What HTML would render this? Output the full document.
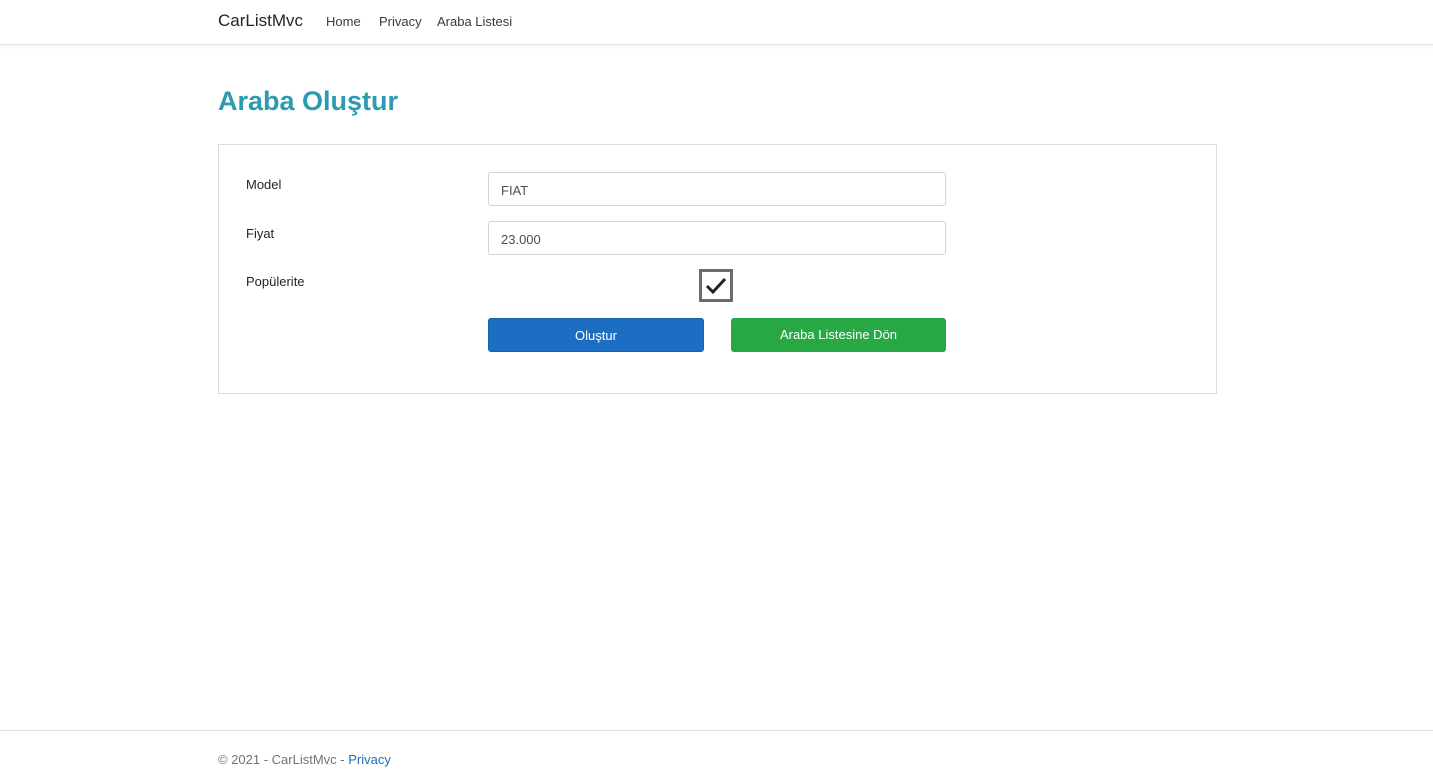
<!DOCTYPE html>
<html><head><meta charset="utf-8"><style>
*{box-sizing:border-box;margin:0;padding:0}
body{width:1433px;height:771px;position:relative;background:#fff;font-family:"Liberation Sans",sans-serif;font-size:13px;color:#212529;overflow:hidden}
.nav{position:absolute;left:0;top:0;width:1433px;height:45px;border-bottom:1px solid #dee2e6;box-shadow:0 2px 4px rgba(0,0,0,.05)}
.brand{position:absolute;left:218px;top:11px;font-size:17px;color:#212529}
.nl{position:absolute;top:14px;font-size:13px;color:#3a3a3a}
h1{position:absolute;left:218px;top:86px;font-size:27px;font-weight:bold;color:#2b9bb0}
.card{position:absolute;left:218px;top:144px;width:999px;height:250px;border:1px solid #dcdcdc}
.lbl{position:absolute;left:246px;font-size:13px}
.inp{position:absolute;left:488px;width:458px;height:34px;border:1px solid #ced4da;border-radius:3px;padding:10px 12px;font-size:13px;color:#495057}
.cb{position:absolute;left:699px;top:269px;width:34px;height:33px;border:3px solid #6b6b6b;background:#fff}
.btn{position:absolute;top:318px;height:34px;border-radius:3px;color:#fff;text-align:center;line-height:34px;font-size:13px}
.foot{position:absolute;left:0;top:730px;width:1433px;border-top:1px solid #dee2e6}
.ft{position:absolute;left:218px;top:752px;font-size:13px;color:#6c757d}
</style></head><body>
<div class="nav"></div>
<div class="brand">CarListMvc</div>
<div class="nl" style="left:326px">Home</div>
<div class="nl" style="left:379px">Privacy</div>
<div class="nl" style="left:437px">Araba Listesi</div>
<h1>Araba Oluştur</h1>
<div class="card"></div>
<div class="lbl" style="top:177px">Model</div>
<div class="lbl" style="top:226px">Fiyat</div>
<div class="lbl" style="top:274px">Popülerite</div>
<div class="inp" style="top:172px">FIAT</div>
<div class="inp" style="top:221px">23.000</div>
<div class="cb"><svg width="28" height="27" viewBox="0 0 28 27"><path d="M5 14 L11 20 L23 7" stroke="#222" stroke-width="3" fill="none"/></svg></div>
<div class="btn" style="left:488px;width:216px;background:#1b6ec2;border:1px solid #1861ac">Oluştur</div>
<div class="btn" style="left:731px;width:215px;background:#28a745">Araba Listesine Dön</div>
<div class="foot"></div>
<div class="ft">© 2021 - CarListMvc - <span style="color:#1b6ec2">Privacy</span></div>
</body></html>
